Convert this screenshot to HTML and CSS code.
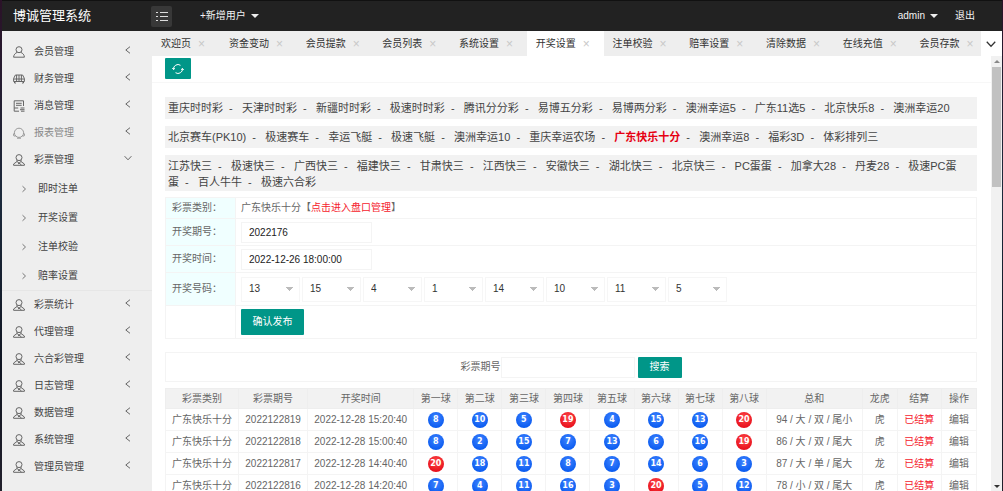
FILE: index.html
```html
<!DOCTYPE html>
<html lang="zh-CN">
<head>
<meta charset="utf-8">
<title>博诚管理系统</title>
<link rel="stylesheet" href="styles.css">
</head>
<body>
<svg class="defs" aria-hidden="true">
  <symbol id="agent" viewBox="0 0 12 12"><circle cx="6" cy="3.600" r="3"/><path d="M4 6v1.500L.6 10v1.300h10.800V10L8 7.500V6M4 7.500 8.500 11M8 7.500 5 10"/></symbol>
  <symbol id="user" viewBox="0 0 12 12"><circle cx="6" cy="3.700" r="3"/><path d="M4.300 6.300C2.200 7.200.7 8.700.6 11.200h10.800C11.300 8.700 9.800 7.200 7.700 6.300"/></symbol>
  <symbol id="finance" viewBox="0 0 12 12"><path d="M.6 8.500V5.500L2.400 2h7.200l1.800 3.500v3zM.6 6h10.800M6 2v6.500M3.600 2v6.500M8.400 2v6.500M1.500 8.500V10H3M10.500 8.500V10H9"/></symbol>
  <symbol id="note" viewBox="0 0 12 12"><path d="M6 11.200H1.200V.8h9.300V6M3 3.300h5.700M3 5.300h5.700M1.200 8h4M7.500 8h4M7 9.700h4.500M8 11.200h3.500"/></symbol>
  <symbol id="report" viewBox="0 0 12 12"><circle cx="6" cy="5.800" r="4.600"/><path d="M.6 6.500v2.200l1.800.6M11.400 6.500v2.200l-1.800.6M4 11.200h4"/></symbol>
  <symbol id="left" viewBox="0 0 8 8"><path d="M6 .7 1.800 4 6 7.300"/></symbol>
  <symbol id="right" viewBox="0 0 8 8"><path d="M2.500 1.200 5.500 4 2.500 6.800"/></symbol>
  <symbol id="down" viewBox="0 0 8 8"><path d="M.6 2.200 4 5.800 7.400 2.200"/></symbol>
</svg>

<header class="topbar">
  <h1 class="brand">博诚管理系统</h1>
  <button class="menu-toggle" aria-label="切换菜单">
    <svg viewBox="0 0 12 10"><path d="M0 1.500h2M4 1.500h8M0 5.500h2M4 5.500h8M0 9.500h2M4 9.500h8"/></svg>
  </button>
  <button class="top-item">+新增用户<span class="caret"></span></button>
  <button class="top-item admin">admin<span class="caret"></span></button>
  <a class="top-item" href="#">退出</a>
</header>

<div class="layout">
  <nav class="sidebar" aria-label="主菜单">
    <a class="item" href="#"><svg class="icon"><use href="#user"/></svg>会员管理<svg class="chev"><use href="#left"/></svg></a>
    <a class="item" href="#"><svg class="icon"><use href="#finance"/></svg>财务管理<svg class="chev"><use href="#left"/></svg></a>
    <a class="item" href="#"><svg class="icon"><use href="#note"/></svg>消息管理<svg class="chev"><use href="#left"/></svg></a>
    <a class="item faded" href="#"><svg class="icon"><use href="#report"/></svg>报表管理<svg class="chev"><use href="#left"/></svg></a>
    <a class="item" href="#"><svg class="icon"><use href="#agent"/></svg>彩票管理<svg class="chev"><use href="#down"/></svg></a>
    <div class="submenu">
      <a class="subitem" href="#"><svg class="tick"><use href="#right"/></svg>即时注单</a>
      <a class="subitem" href="#"><svg class="tick"><use href="#right"/></svg>开奖设置</a>
      <a class="subitem" href="#"><svg class="tick"><use href="#right"/></svg>注单校验</a>
      <a class="subitem" href="#"><svg class="tick"><use href="#right"/></svg>赔率设置</a>
    </div>
    <a class="item" href="#"><svg class="icon"><use href="#agent"/></svg>彩票统计<svg class="chev"><use href="#left"/></svg></a>
    <a class="item" href="#"><svg class="icon"><use href="#agent"/></svg>代理管理<svg class="chev"><use href="#left"/></svg></a>
    <a class="item" href="#"><svg class="icon"><use href="#agent"/></svg>六合彩管理<svg class="chev"><use href="#left"/></svg></a>
    <a class="item" href="#"><svg class="icon"><use href="#agent"/></svg>日志管理<svg class="chev"><use href="#left"/></svg></a>
    <a class="item" href="#"><svg class="icon"><use href="#agent"/></svg>数据管理<svg class="chev"><use href="#left"/></svg></a>
    <a class="item" href="#"><svg class="icon"><use href="#agent"/></svg>系统管理<svg class="chev"><use href="#left"/></svg></a>
    <a class="item" href="#"><svg class="icon"><use href="#agent"/></svg>管理员管理<svg class="chev"><use href="#left"/></svg></a>
  </nav>

  <div class="workspace">
    <div class="tabbar">
      <a class="tab first" href="#">欢迎页<span class="close">×</span></a>
      <a class="tab" href="#">资金变动<span class="close">×</span></a>
      <a class="tab" href="#">会员提款<span class="close">×</span></a>
      <a class="tab" href="#">会员列表<span class="close">×</span></a>
      <a class="tab" href="#">系统设置<span class="close">×</span></a>
      <a class="tab active" href="#">开奖设置<span class="close">×</span></a>
      <a class="tab" href="#">注单校验<span class="close">×</span></a>
      <a class="tab" href="#">赔率设置<span class="close">×</span></a>
      <a class="tab" href="#">清除数据<span class="close">×</span></a>
      <a class="tab" href="#">在线充值<span class="close">×</span></a>
      <a class="tab last" href="#">会员存款<span class="close">×</span></a>
      <button class="more" aria-label="更多标签"><svg viewBox="0 0 8 8"><use href="#down"/></svg></button>
    </div>

    <div class="frame">
      <main class="page">
        <div class="toolbar">
          <button class="btn refresh" aria-label="刷新"><svg viewBox="0 0 12 12"><path d="M1.500 6.500A4.500 4.500 0 0 1 8.500 2.300M10.500 5.500A4.500 4.500 0 0 1 3.500 9.700M1.500 6.500.3 5M1.500 6.500 3 5.300M10.500 5.500 11.700 7M10.500 5.500 9 6.700"/></svg></button>
        </div>
        <div class="content">
          <div class="games">
            <p class="game-row"><a href="#">重庆时时彩</a>&nbsp; - &nbsp;&nbsp;<a href="#">天津时时彩</a>&nbsp; - &nbsp;&nbsp;<a href="#">新疆时时彩</a>&nbsp; - &nbsp;&nbsp;<a href="#">极速时时彩</a>&nbsp; - &nbsp;&nbsp;<a href="#">腾讯分分彩</a>&nbsp; - &nbsp;&nbsp;<a href="#">易博五分彩</a>&nbsp; - &nbsp;&nbsp;<a href="#">易博两分彩</a>&nbsp; - &nbsp;&nbsp;<a href="#">澳洲幸运5</a>&nbsp; - &nbsp;&nbsp;<a href="#">广东11选5</a>&nbsp; - &nbsp;&nbsp;<a href="#">北京快乐8</a>&nbsp; - &nbsp;&nbsp;<a href="#">澳洲幸运20</a></p>
            <p class="game-row"><a href="#">北京赛车(PK10)</a>&nbsp; - &nbsp;&nbsp;<a href="#">极速赛车</a>&nbsp; - &nbsp;&nbsp;<a href="#">幸运飞艇</a>&nbsp; - &nbsp;&nbsp;<a href="#">极速飞艇</a>&nbsp; - &nbsp;&nbsp;<a href="#">澳洲幸运10</a>&nbsp; - &nbsp;&nbsp;<a href="#">重庆幸运农场</a>&nbsp; - &nbsp;&nbsp;<a class="current" href="#">广东快乐十分</a>&nbsp; - &nbsp;&nbsp;<a href="#">澳洲幸运8</a>&nbsp; - &nbsp;&nbsp;<a href="#">福彩3D</a>&nbsp; - &nbsp;&nbsp;<a href="#">体彩排列三</a></p>
            <p class="game-row"><a href="#">江苏快三</a>&nbsp; - &nbsp;&nbsp;<a href="#">极速快三</a>&nbsp; - &nbsp;&nbsp;<a href="#">广西快三</a>&nbsp; - &nbsp;&nbsp;<a href="#">福建快三</a>&nbsp; - &nbsp;&nbsp;<a href="#">甘肃快三</a>&nbsp; - &nbsp;&nbsp;<a href="#">江西快三</a>&nbsp; - &nbsp;&nbsp;<a href="#">安徽快三</a>&nbsp; - &nbsp;&nbsp;<a href="#">湖北快三</a>&nbsp; - &nbsp;&nbsp;<a href="#">北京快三</a>&nbsp; - &nbsp;&nbsp;<a href="#">PC蛋蛋</a>&nbsp; - &nbsp;&nbsp;<a href="#">加拿大28</a>&nbsp; - &nbsp;&nbsp;<a href="#">丹麦28</a>&nbsp; - &nbsp;&nbsp;<a href="#">极速PC蛋蛋</a>&nbsp; - &nbsp;&nbsp;<a href="#">百人牛牛</a>&nbsp; - &nbsp;&nbsp;<a href="#">极速六合彩</a></p>
          </div>

          <form class="draw-form">
            <div class="field"><span class="label">彩票类别：</span><div class="value"><span>广东快乐十分【<a class="red" href="#">点击进入盘口管理</a>】</span></div></div>
            <div class="field"><label class="label" for="issue">开奖期号：</label><div class="value"><input class="text" id="issue" value="2022176"></div></div>
            <div class="field"><label class="label" for="time">开奖时间：</label><div class="value"><input class="text" id="time" value="2022-12-26 18:00:00"></div></div>
            <div class="field tall"><label class="label" for="n1">开奖号码：</label><div class="value">
              <select id="n1"><option>13</option></select>
              <select aria-label="第二球"><option>15</option></select>
              <select aria-label="第三球"><option>4</option></select>
              <select aria-label="第四球"><option>1</option></select>
              <select aria-label="第五球"><option>14</option></select>
              <select aria-label="第六球"><option>10</option></select>
              <select aria-label="第七球"><option>11</option></select>
              <select aria-label="第八球"><option>5</option></select>
            </div></div>
            <div class="field tall"><span class="label blank"></span><div class="value"><button class="btn submit" type="button">确认发布</button></div></div>
          </form>

          <form class="search">
            <label for="q">彩票期号</label><input class="text" id="q"><button class="btn find" type="button">搜索</button>
          </form>

          <table class="results">
            <colgroup><col class="c-type"><col class="c-issue"><col class="c-time"><col class="c-ball" span="8"><col class="c-sum"><col class="c-small"><col class="c-ball"><col class="c-small"></colgroup>
            <thead><tr><th>彩票类别</th><th>彩票期号</th><th>开奖时间</th><th>第一球</th><th>第二球</th><th>第三球</th><th>第四球</th><th>第五球</th><th>第六球</th><th>第七球</th><th>第八球</th><th>总和</th><th>龙虎</th><th>结算</th><th>操作</th></tr></thead>
            <tbody>
              <tr><td>广东快乐十分</td><td>2022122819</td><td>2022-12-28 15:20:40</td><td><span class="ball">8</span></td><td><span class="ball">10</span></td><td><span class="ball">5</span></td><td><span class="ball hot">19</span></td><td><span class="ball">4</span></td><td><span class="ball">15</span></td><td><span class="ball">13</span></td><td><span class="ball hot">20</span></td><td>94 / 大 / 双 / 尾小</td><td>虎</td><td class="red">已结算</td><td><a href="#">编辑</a></td></tr>
              <tr><td>广东快乐十分</td><td>2022122818</td><td>2022-12-28 15:00:40</td><td><span class="ball">8</span></td><td><span class="ball">2</span></td><td><span class="ball">15</span></td><td><span class="ball">7</span></td><td><span class="ball">13</span></td><td><span class="ball">6</span></td><td><span class="ball">16</span></td><td><span class="ball hot">19</span></td><td>86 / 大 / 双 / 尾大</td><td>虎</td><td class="red">已结算</td><td><a href="#">编辑</a></td></tr>
              <tr><td>广东快乐十分</td><td>2022122817</td><td>2022-12-28 14:40:40</td><td><span class="ball hot">20</span></td><td><span class="ball">18</span></td><td><span class="ball">11</span></td><td><span class="ball">8</span></td><td><span class="ball">7</span></td><td><span class="ball">14</span></td><td><span class="ball">6</span></td><td><span class="ball">3</span></td><td>87 / 大 / 单 / 尾大</td><td>龙</td><td class="red">已结算</td><td><a href="#">编辑</a></td></tr>
              <tr><td>广东快乐十分</td><td>2022122816</td><td>2022-12-28 14:20:40</td><td><span class="ball">7</span></td><td><span class="ball">4</span></td><td><span class="ball">11</span></td><td><span class="ball">16</span></td><td><span class="ball">3</span></td><td><span class="ball hot">20</span></td><td><span class="ball">5</span></td><td><span class="ball">12</span></td><td>78 / 小 / 双 / 尾大</td><td>虎</td><td class="red">已结算</td><td><a href="#">编辑</a></td></tr>
            </tbody>
          </table>
        </div>
      </main>
      <div class="scrollbar" aria-hidden="true"><span class="arrow up"></span><span class="thumb"></span><span class="arrow down"></span></div>
    </div>
  </div>
</div>
</body>
</html>
```
FILE: styles.css
```css
* { box-sizing: border-box; }

body {
  margin: 0;
  height: 100vh;
  padding: 0 1px 0 2px;
  display: flex;
  flex-direction: column;
  overflow: hidden;
  background: linear-gradient(#2b1228, #1c2a3c 40%, #101522 75%, #22202c);
  font: 10px/14px "Liberation Sans", "Noto Sans CJK SC", sans-serif;
  color: #666;
}

a { color: inherit; text-decoration: none; }
button, input, select { font: inherit; margin: 0; }
button { border: 0; padding: 0; cursor: pointer; }
svg { fill: none; stroke: currentColor; }
.defs { display: none; }

/* top bar */
.topbar {
  flex: none;
  height: 31px;
  display: flex;
  align-items: center;
  padding: 0 27px 0 11px;
  background: #222;
  border-top: 1px solid #111;
  color: #f2f2f2;
}
.brand { margin: 0; width: 138px; font-size: 13px; font-weight: 400; color: #fff; }
.menu-toggle {
  width: 21px;
  height: 21px;
  margin-right: 28px;
  display: grid;
  place-items: center;
  border-radius: 2px;
  background: #383838;
  color: #ddd;
}
.menu-toggle svg { width: 12px; height: 10px; stroke-width: 1; }
.top-item { display: flex; align-items: center; gap: 5px; background: none; color: inherit; }
.admin { margin-left: auto; margin-right: 17px; }
.caret { border: 4px solid transparent; border-top-color: #eee; border-bottom: 0; }

.layout { flex: 1; min-height: 0; display: flex; }

/* sidebar */
.sidebar { flex: none; width: 150px; padding-top: 7px; background: #eee; color: #444; }
.item { display: flex; align-items: center; height: 27px; padding: 0 20px 0 11px; }
.item.faded { color: #888; }
.icon { width: 12px; height: 12px; margin-right: 9px; stroke-width: 1; color: #666; }
.faded .icon { color: #999; }
.chev { width: 8px; height: 8px; margin: 0 0 4px auto; color: #666; }
.submenu { border-top: 1px solid #eee; border-bottom: 1px solid #e6e6e6; }
.subitem { display: flex; align-items: center; height: 29px; padding-left: 18px; }
.tick { width: 8px; height: 8px; margin-right: 10px; color: #777; }

/* tabs */
.workspace { flex: 1; min-width: 0; display: flex; flex-direction: column; background: #fff; }
.tabbar { flex: none; height: 25px; display: flex; background: #eee; color: #333; }
.tab {
  flex: 77 1 0;
  display: flex;
  align-items: center;
  gap: 7px;
  padding-left: 9px;
  white-space: nowrap;
}
.tab.first { flex-grow: 67; }
.tab.last { flex-grow: 70; }
.tab.active { background: #fff; }
.close { font-size: 12px; color: #c8c8c8; }
.more { width: 21px; display: grid; place-items: center; background: #fff; color: #333; }
.more svg { width: 10px; height: 10px; }

/* scrolling frame */
.frame { flex: 1; min-height: 0; display: flex; }
.page { flex: 1; min-width: 0; overflow: hidden; }
.scrollbar { width: 11px; display: flex; flex-direction: column; align-items: center; background: #f1f1f1; }
.thumb { width: 9px; height: 120px; background: #c1c1c1; }
.arrow { border: 3px solid transparent; }
.arrow.up { margin: 1px 0 4px; border-bottom-color: #888; }
.arrow.down { margin-top: auto; border-top-color: #333; }

.btn { background: #009688; color: #fff; border-radius: 1px; }
.toolbar { padding: 2px 14px 3px 13px; border-bottom: 1px solid #f7f7f7; }
.refresh { display: grid; place-items: center; width: 26px; height: 21px; }
.refresh svg { width: 12px; height: 12px; }
.content { padding: 14px 14px 0 13px; }

/* game links */
.games { display: flex; flex-direction: column; gap: 7px; font-size: 11px; line-height: 16px; color: #444; }
.game-row { margin: 0; min-height: 22px; padding: 3px 14px 1px 3px; background: #f2f2f2; }
.current { color: #e60012; font-weight: 700; }
.red { color: #f5222d; }

/* draw form */
.draw-form { margin-top: 6px; border: 1px solid #f4f4f4; border-bottom: 0; }
.field { display: flex; min-height: 27px; border-bottom: 1px solid #f4f4f4; }
.field:first-child { min-height: 21px; }
.field.tall { min-height: 33px; }
.label {
  width: 70px;
  padding-left: 6px;
  display: flex;
  align-items: center;
  background: #f0ffff;
  border-right: 1px solid #f4f4f4;
}
.label.blank { background: #fff; }
.value { display: flex; align-items: center; gap: 2px; padding-left: 5px; }
.text { height: 21px; width: 131px; padding: 0 7px; border: 1px solid #f4f4f4; background: #fff; color: #222; }
select {
  appearance: none;
  width: 59px;
  height: 25px;
  padding: 0 7px;
  border: 1px solid #f6f6f6;
  color: #333;
  background:
    linear-gradient(to bottom right, #bbb 50%, transparent 50%) right 5px center / 4px 4px no-repeat,
    linear-gradient(to bottom left, #bbb 50%, transparent 50%) right 9px center / 4px 4px no-repeat,
    #fff;
}
.submit { width: 63px; height: 26px; }

/* search */
.search {
  margin-top: 13px;
  height: 30px;
  display: flex;
  justify-content: center;
  align-items: center;
  border: 1px solid #f4f4f4;
}
.search .text { width: 134px; margin-right: 3px; }
.find { width: 44px; height: 21px; }

/* results */
.results { width: 100%; margin-top: 6px; table-layout: fixed; border-collapse: collapse; text-align: center; }
.c-type { width: 73px; }
.c-issue { width: 69px; }
.c-time { width: 106px; }
.c-ball { width: 44px; }
.c-sum { width: 96px; }
.c-small { width: 35px; }
.results th, .results td { height: 22px; padding: 0; border: 1px solid #f4f4f4; white-space: nowrap; }
.results th { height: 20px; background: #f2f2f2; border-color: #eee; font-weight: 400; }
.ball {
  display: block;
  width: 16px;
  height: 16px;
  margin: 0 auto;
  border-radius: 50%;
  background: radial-gradient(circle at 50% 35%, #3f83ff, #0b5cf0 75%);
  color: #fff;
  font: bold 8px/16px "DejaVu Sans", sans-serif;
}
.ball.hot { background: radial-gradient(circle at 50% 35%, #ff4a4a, #e8101c 75%); }
```
